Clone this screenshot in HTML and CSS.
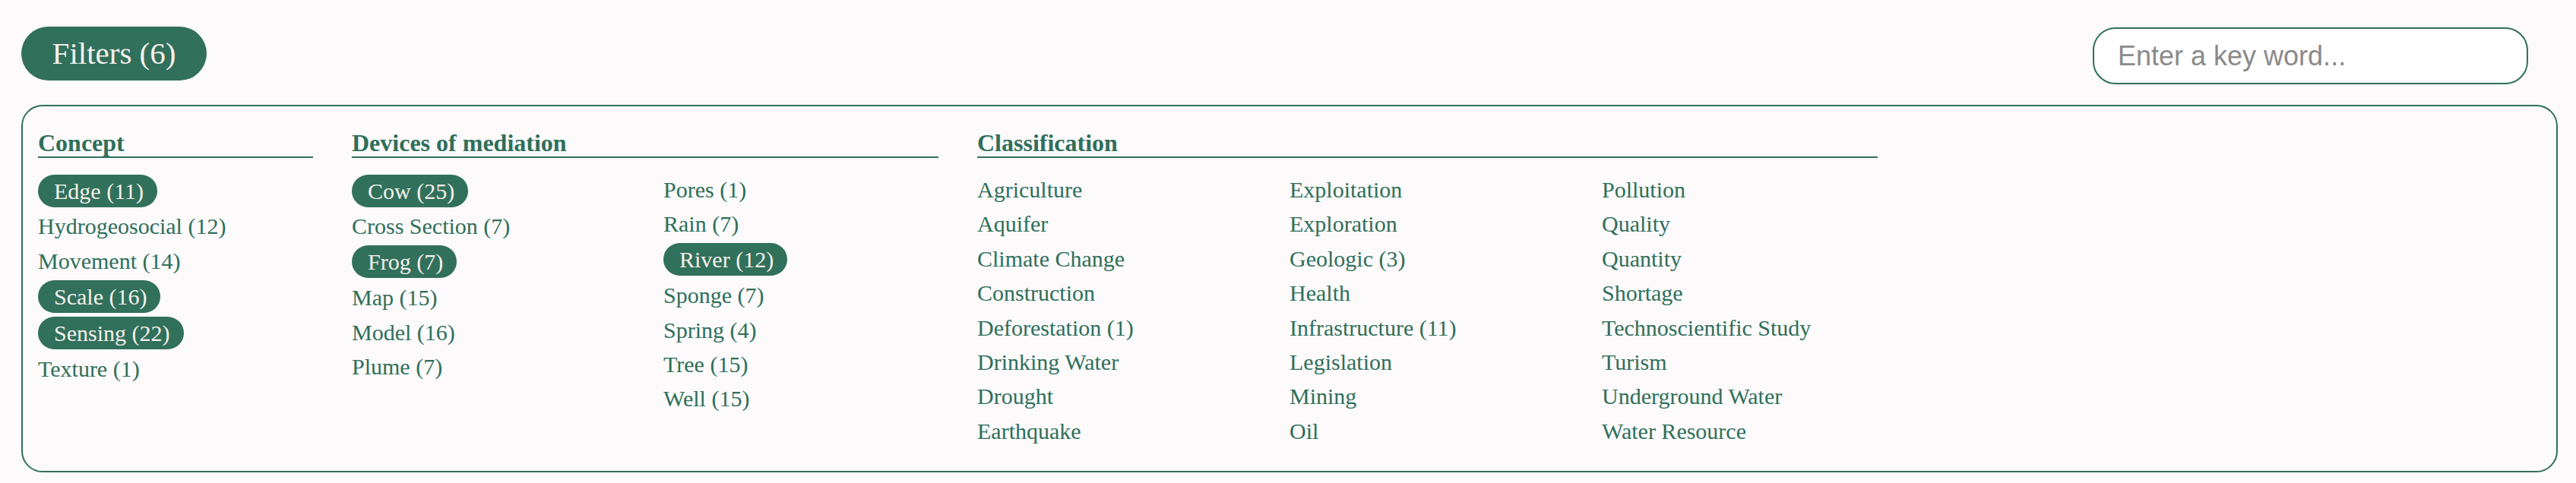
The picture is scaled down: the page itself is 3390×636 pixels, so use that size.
FILE: index.html
```html
<!DOCTYPE html>
<html lang="en">
<head>
<meta charset="utf-8">
<title>Filters</title>
<link rel="stylesheet" href="styles.css">
</head>
<body>
  <div class="topbar">
    <button class="filters-btn" type="button">Filters (6)</button>
    <input class="search" type="text" placeholder="Enter a key word...">
  </div>
  <section class="panel">
    <div class="group group-concept">
      <h3 class="group-title">Concept</h3>
      <div class="cols">
        <ul class="list">
          <li class="item selected">Edge (11)</li>
          <li class="item">Hydrogeosocial (12)</li>
          <li class="item">Movement (14)</li>
          <li class="item selected">Scale (16)</li>
          <li class="item selected">Sensing (22)</li>
          <li class="item">Texture (1)</li>
        </ul>
      </div>
    </div>
    <div class="group group-devices">
      <h3 class="group-title">Devices of mediation</h3>
      <div class="cols">
        <ul class="list">
          <li class="item selected">Cow (25)</li>
          <li class="item">Cross Section (7)</li>
          <li class="item selected">Frog (7)</li>
          <li class="item">Map (15)</li>
          <li class="item">Model (16)</li>
          <li class="item">Plume (7)</li>
        </ul>
        <ul class="list">
          <li class="item">Pores (1)</li>
          <li class="item">Rain (7)</li>
          <li class="item selected">River (12)</li>
          <li class="item">Sponge (7)</li>
          <li class="item">Spring (4)</li>
          <li class="item">Tree (15)</li>
          <li class="item">Well (15)</li>
        </ul>
      </div>
    </div>
    <div class="group group-classification">
      <h3 class="group-title">Classification</h3>
      <div class="cols">
        <ul class="list">
          <li class="item">Agriculture</li>
          <li class="item">Aquifer</li>
          <li class="item">Climate Change</li>
          <li class="item">Construction</li>
          <li class="item">Deforestation (1)</li>
          <li class="item">Drinking Water</li>
          <li class="item">Drought</li>
          <li class="item">Earthquake</li>
        </ul>
        <ul class="list">
          <li class="item">Exploitation</li>
          <li class="item">Exploration</li>
          <li class="item">Geologic (3)</li>
          <li class="item">Health</li>
          <li class="item">Infrastructure (11)</li>
          <li class="item">Legislation</li>
          <li class="item">Mining</li>
          <li class="item">Oil</li>
        </ul>
        <ul class="list">
          <li class="item">Pollution</li>
          <li class="item">Quality</li>
          <li class="item">Quantity</li>
          <li class="item">Shortage</li>
          <li class="item">Technoscientific Study</li>
          <li class="item">Turism</li>
          <li class="item">Underground Water</li>
          <li class="item">Water Resource</li>
        </ul>
      </div>
    </div>
  </section>
</body>
</html>
```
FILE: styles.css
```css
* {
  box-sizing: border-box;
}

html, body {
  margin: 0;
  padding: 0;
  background: #fcfafb;
}

body {
  padding: 0 24px 0 28px;
  font-family: "Liberation Serif", "Times New Roman", serif;
  color: #2f6f5a;
}

.topbar {
  display: flex;
  justify-content: space-between;
  align-items: flex-start;
  padding-top: 35px;
  margin-bottom: 27px;
}

.filters-btn {
  width: 244px;
  height: 71px;
  border: none;
  border-radius: 36px;
  background: #31705b;
  color: #f6f1ec;
  font-family: "Liberation Serif", "Times New Roman", serif;
  font-size: 41px;
  line-height: 71px;
  padding: 0;
  text-align: center;
}

.search {
  width: 573px;
  height: 75px;
  margin-top: 1px;
  margin-right: 39px;
  border: 2px solid #31705b;
  border-radius: 30px;
  background: #ffffff;
  padding: 0 20px 0 31px;
  font-family: "Liberation Sans", Arial, sans-serif;
  font-size: 36px;
  color: #333;
  outline: none;
}

.search::placeholder {
  color: #8a8a8a;
}

.panel {
  border: 2px solid #31705b;
  border-radius: 28px;
  padding: 30px 20px 31px 20px;
  display: flex;
  align-items: flex-start;
  gap: 51px;
}

.group-concept {
  width: 362px;
}

.group-devices {
  width: 772px;
}

.group-classification {
  width: 1185px;
}

.group-title {
  margin: 0 0 20px 0;
  font-size: 32px;
  font-weight: bold;
  line-height: 36px;
  border-bottom: 2px solid #31705b;
  color: #2f6f5a;
}

.cols {
  display: flex;
  gap: 48px;
}

.cols .list {
  flex: 1 1 0;
}

.list {
  list-style: none;
  margin: 0;
  padding: 0;
  display: flex;
  flex-direction: column;
  align-items: flex-start;
  gap: 2.4px;
}

.item {
  font-size: 30px;
  line-height: 43px;
  height: 43px;
  white-space: nowrap;
  color: #2f6f5a;
}

.item.selected {
  background: #31705b;
  color: #f6f1ec;
  border-radius: 22px;
  padding: 0 18px 0 21px;
  margin: 1.5px 0;
}
```
